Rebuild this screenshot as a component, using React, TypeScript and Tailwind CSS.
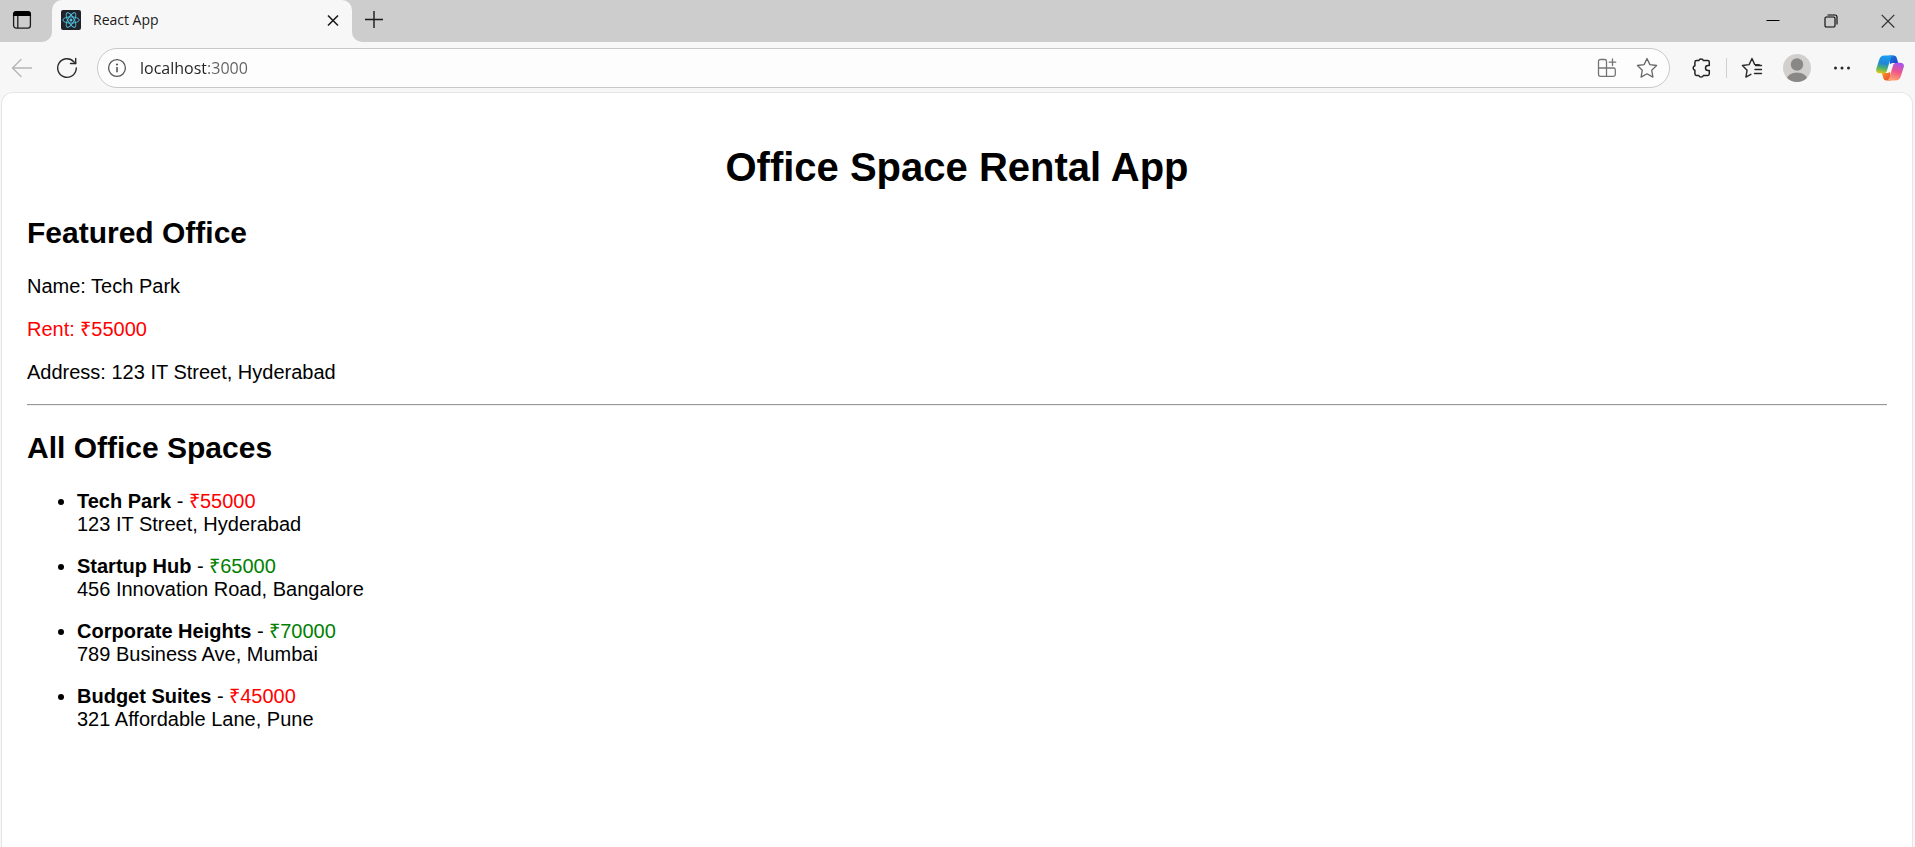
import React from "react";

type Office = { name: string; rent: number; address: string };

const offices: Office[] = [
  { name: "Tech Park", rent: 55000, address: "123 IT Street, Hyderabad" },
  { name: "Startup Hub", rent: 65000, address: "456 Innovation Road, Bangalore" },
  { name: "Corporate Heights", rent: 70000, address: "789 Business Ave, Mumbai" },
  { name: "Budget Suites", rent: 45000, address: "321 Affordable Lane, Pune" },
];

const rentColor = (rent: number) => (rent < 60000 ? "text-[#ff0000]" : "text-[#008000]");

function TabActionsIcon() {
  return (
    <svg width="20" height="20" viewBox="0 0 20 20" fill="none" stroke="#1b1b1b" strokeWidth="1.3">
      <rect x="1.6" y="1.9" width="16.8" height="16.2" rx="2.6" />
      <path d="M1 6V4.4A3.4 3.4 0 0 1 4.4 1h11.2A3.4 3.4 0 0 1 19 4.4V6z" fill="#000" stroke="none" />
      <path d="M5.8 6v12" />
    </svg>
  );
}

function ReactIcon() {
  return (
    <svg width="20" height="20" viewBox="0 0 20 20" fill="none" stroke="#53c1de" strokeWidth="0.9">
      <rect width="20" height="20" rx="2" fill="#20232a" stroke="none" />
      <ellipse cx="10" cy="10" rx="8.2" ry="3.1" />
      <ellipse cx="10" cy="10" rx="8.2" ry="3.1" transform="rotate(60 10 10)" />
      <ellipse cx="10" cy="10" rx="8.2" ry="3.1" transform="rotate(120 10 10)" />
      <circle cx="10" cy="10" r="1.5" fill="#53c1de" stroke="none" />
    </svg>
  );
}

function BackIcon() {
  return (
    <svg width="22" height="20" viewBox="0 0 22 20" fill="none" stroke="#b5b5b5" strokeWidth="1.3" strokeLinecap="round" strokeLinejoin="round">
      <path d="M20.5 10H1.5M10 1.5L1.5 10l8.5 8.5" />
    </svg>
  );
}

function ReloadIcon() {
  return (
    <svg width="22" height="22" viewBox="0 0 22 22" fill="none" stroke="#2a2a2a" strokeWidth="1.4" strokeLinecap="round" strokeLinejoin="round">
      <path d="M20.300 11a9.300 9.300 0 1 1-2.500-6.300L19.600 6.500" />
      <path d="M19.700 1.500v5h-5.200" />
    </svg>
  );
}

function InfoIcon() {
  return (
    <svg width="20" height="20" viewBox="0 0 20 20" fill="none" stroke="#555" strokeWidth="1.3">
      <circle cx="10" cy="10" r="8.4" />
      <path d="M10 9v5.2" strokeWidth="1.6" />
      <circle cx="10" cy="6.5" r="1.1" fill="#555" stroke="none" />
    </svg>
  );
}

function AppsIcon() {
  return (
    <svg width="20" height="20" viewBox="0 0 20 20" fill="none" stroke="#757575" strokeWidth="1.3" strokeLinecap="round" strokeLinejoin="round">
      <path d="M9.500 18.300H3.300a1.800 1.800 0 0 1-1.800-1.800V3.300a1.800 1.800 0 0 1 1.800-1.800h4.400a1.800 1.800 0 0 1 1.800 1.800v15zM9.500 10h7a1.800 1.800 0 0 1 1.800 1.800v4.700a1.800 1.800 0 0 1-1.800 1.800h-7M1.500 10h8" />
      <path d="M15.500 1v6.500M12.200 4.200h6.500" />
    </svg>
  );
}

function StarIcon() {
  return (
    <svg width="22" height="22" viewBox="0 0 22 22" fill="none" stroke="#686868" strokeWidth="1.3" strokeLinejoin="round">
      <path d="M11 1.500l2.900 6.100 6.700.9-4.900 4.700 1.200 6.900-5.900-3.300-5.900 3.300 1.200-6.900-4.900-4.700 6.700-.9z" />
    </svg>
  );
}

function PuzzleIcon() {
  return (
    <svg width="20" height="22" viewBox="0 0 20 22" fill="none" stroke="#222" strokeWidth="1.5" strokeLinejoin="round">
      <path d="M5.500 3.600h2.300a2.400 2.400 0 0 1 4.600 0h4.300a1.600 1.600 0 0 1 1.600 1.600v3.300h-1.300a2.500 2.500 0 0 0 0 5h1.300v3.300a1.600 1.600 0 0 1-1.600 1.600h-4.300a2.400 2.400 0 0 1-4.600 0H5.500a1.600 1.600 0 0 1-1.600-1.600v-3.500a2.400 2.400 0 0 1 0-4.600V5.200A1.600 1.600 0 0 1 5.500 3.600z" />
    </svg>
  );
}

function FavoritesIcon() {
  return (
    <svg width="22" height="22" viewBox="0 0 22 22" fill="none" stroke="#2a2a2a" strokeWidth="1.4" strokeLinejoin="round" strokeLinecap="round">
      <path d="M18.500 8l-4.900-.6L11 1.500 8.100 7.600l-6.700.9 4.700 4.700-1.200 6.900 5-2.800" />
      <path d="M14.500 8.500h6M14 12.500h6.500M13.500 16.500h7" />
    </svg>
  );
}

function ProfileIcon() {
  return (
    <svg width="28" height="28" viewBox="0 0 28 28">
      <defs>
        <clipPath id="avatar">
          <circle cx="14" cy="14" r="14" />
        </clipPath>
      </defs>
      <circle cx="14" cy="14" r="14" fill="#d2d0ce" />
      <circle cx="14" cy="10.500" r="6.200" fill="#8a8886" />
      <ellipse cx="14" cy="25.500" rx="10.200" ry="7" fill="#8a8886" clipPath="url(#avatar)" />
    </svg>
  );
}

function CopilotIcon() {
  return (
    <svg width="28" height="26" viewBox="0 0 28 26">
      <defs>
        <linearGradient id="cpLeft" x1="0.3" y1="0" x2="0.1" y2="1">
          <stop offset="0" stopColor="#1c9df0" />
          <stop offset="0.4" stopColor="#1f86d8" />
          <stop offset="0.68" stopColor="#4fb36a" />
          <stop offset="1" stopColor="#f2cc0c" />
        </linearGradient>
        <linearGradient id="cpTop" x1="0" y1="0" x2="1" y2="1">
          <stop offset="0" stopColor="#1a7fe0" />
          <stop offset="1" stopColor="#1b3fc0" />
        </linearGradient>
        <linearGradient id="cpRight" x1="0.7" y1="0" x2="0.4" y2="1">
          <stop offset="0" stopColor="#a653ee" />
          <stop offset="0.5" stopColor="#f0568a" />
          <stop offset="1" stopColor="#ffa66b" />
        </linearGradient>
        <linearGradient id="cpBottom" x1="0" y1="0" x2="1" y2="1">
          <stop offset="0" stopColor="#f9a12b" />
          <stop offset="1" stopColor="#e5402f" />
        </linearGradient>
      </defs>
      <path d="M13 .5h4.500c2 0 2.800 1 3.300 2.700L22.200 8H18c-2 0-3 .3-4 1.300z" fill="url(#cpTop)" />
      <path d="M15 25.500h-4.500c-2 0-2.800-1-3.300-2.700L5.800 18H10c2 0 3-.3 4-1.300z" fill="url(#cpBottom)" />
      <path d="M8.500.5H18c-2 .3-3 1.500-3.600 3.500L11 15.500c-.6 2-1.600 2.800-3.400 2.800H4c-3 0-4.500-1.800-3.700-4.500L3.300 4.500C4.100 1.800 5.800.5 8.500.5z" fill="url(#cpLeft)" />
      <path d="M19.500 25.500H10c2-.3 3-1.500 3.600-3.500L17 10.500c.6-2 1.600-2.800 3.400-2.800H24c3 0 4.500 1.800 3.700 4.500l-3 9.300c-.8 2.700-2.500 4-5.200 4z" fill="url(#cpRight)" />
    </svg>
  );
}

function IconButton({ label, className, children }: { label: string; className: string; children: React.ReactNode }) {
  return (
    <button type="button" aria-label={label} className={`flex shrink-0 items-center justify-center ${className}`}>
      {children}
    </button>
  );
}

function TabStrip() {
  return (
    <div className="flex h-[42px] bg-[#f7f7f7]">
      <div className="flex w-[52px] shrink-0 items-center rounded-br-[10px] bg-[#cdcdcd] pb-0.5 pl-3">
        <IconButton label="Tab actions" className="size-5">
          <TabActionsIcon />
        </IconButton>
      </div>
      <div className="w-[300px] shrink-0 bg-linear-to-b from-[#cdcdcd] from-50% to-[#f7f7f7] to-50%">
        <div className="flex h-full items-center rounded-t-[10px] bg-[#f7f7f7] pr-[11px] pb-0.5 pl-[9px]">
          <ReactIcon />
          <span className="ml-3 flex-1 text-sm text-[#1b1b1b]">React App</span>
          <IconButton label="Close tab" className="size-4">
            <svg width="16" height="16" viewBox="0 0 16 16" stroke="#1b1b1b" strokeWidth="1.6">
              <path d="M3 3.500l10 10M13 3.500l-10 10" />
            </svg>
          </IconButton>
        </div>
      </div>
      <div className="flex flex-1 items-center justify-between rounded-bl-[10px] bg-[#cdcdcd] pb-0.5">
        <IconButton label="New tab" className="ml-3 size-5">
          <svg width="20" height="20" viewBox="0 0 20 20" stroke="#1b1b1b" strokeWidth="1.4">
            <path d="M1 9.500h18M10 1v17" />
          </svg>
        </IconButton>
        <div className="flex">
          <IconButton label="Minimize" className="h-10 w-[58px]">
            <svg width="14" height="14" viewBox="0 0 14 14" stroke="#000" strokeWidth="1">
              <path d="M.5 7.500h13" />
            </svg>
          </IconButton>
          <IconButton label="Restore" className="h-10 w-[58px]">
            <svg width="14" height="16" viewBox="0 0 14 16" fill="none" stroke="#000" strokeWidth="1.1">
              <rect x="1" y="5" width="10" height="10" rx="1.2" />
              <path d="M3.500 3h7.500a2 2 0 0 1 2 2v7.500" />
            </svg>
          </IconButton>
          <IconButton label="Close" className="h-10 w-[55px]">
            <svg width="14" height="16" viewBox="0 0 14 16" stroke="#333" strokeWidth="1.2">
              <path d="M.7 2.900l12.600 12.600M13.300 2.900L.7 15.500" />
            </svg>
          </IconButton>
        </div>
      </div>
    </div>
  );
}

function Toolbar() {
  return (
    <div className="flex h-[50px] items-center px-[11px] pt-0.5">
      <IconButton label="Back" className="w-[22px]">
        <BackIcon />
      </IconButton>
      <IconButton label="Reload" className="ml-[23px] w-[22px]">
        <ReloadIcon />
      </IconButton>
      <div className="ml-[19px] flex h-10 flex-1 items-center rounded-full border border-[#c9c9c9] bg-[#fdfdfd] pr-[11px] pl-[9px]">
        <IconButton label="View site information" className="size-5">
          <InfoIcon />
        </IconButton>
        <input
          aria-label="Address"
          defaultValue="localhost:3000"
          className="ml-[13px] min-w-0 flex-1 bg-linear-to-r from-[#222222] from-[66px] to-[#606060] to-[66px] bg-clip-text text-base text-transparent caret-black outline-none"
        />
        <IconButton label="Apps" className="size-5">
          <AppsIcon />
        </IconButton>
        <IconButton label="Add to favorites" className="ml-[19px] size-[22px]">
          <StarIcon />
        </IconButton>
      </div>
      <IconButton label="Extensions" className="ml-[21px] w-5">
        <PuzzleIcon />
      </IconButton>
      <div className="ml-[15px] h-5 w-px bg-[#cfcfcf]" />
      <IconButton label="Favorites" className="ml-[14px] w-[22px]">
        <FavoritesIcon />
      </IconButton>
      <IconButton label="Profile" className="ml-5 size-7">
        <ProfileIcon />
      </IconButton>
      <IconButton label="Settings and more" className="ml-[22px] w-[18px]">
        <svg width="18" height="6" viewBox="0 0 18 6" fill="#2a2a2a">
          <circle cx="2.500" cy="3" r="1.500" />
          <circle cx="9" cy="3" r="1.500" />
          <circle cx="15.500" cy="3" r="1.500" />
        </svg>
      </IconButton>
      <IconButton label="Copilot" className="ml-[25px] w-7">
        <CopilotIcon />
      </IconButton>
    </div>
  );
}

export default function App() {
  const featured = offices[0];
  return (
    <div className="flex min-h-screen flex-col bg-[#f7f7f7] font-['Open_Sans',sans-serif]">
      <header>
        <TabStrip />
        <Toolbar />
      </header>
      <main className="mr-[2px] ml-px flex-1 rounded-t-[12px] border border-b-0 border-[#e6e6e6] bg-white px-[25px] pt-[51px] font-['Liberation_Sans',Arial,sans-serif] text-[20px] leading-[23px] text-black">
        <h1 className="text-center text-[40px] leading-[46px] font-bold">Office Space Rental App</h1>
        <h2 className="mt-[26px] text-[30px] leading-[34px] font-bold">Featured Office</h2>
        <div className="mt-[25px] flex flex-col gap-5">
          <p>Name: {featured.name}</p>
          <p className={rentColor(featured.rent)}>Rent: ₹{featured.rent}</p>
          <p>Address: {featured.address}</p>
        </div>
        <hr className="mt-5 h-[2px] border-t border-b border-t-[#9a9a9a] border-b-[#eeeeee]" />
        <h2 className="mt-[25px] text-[30px] leading-[34px] font-bold">All Office Spaces</h2>
        <ul className="mt-[25px] flex list-disc flex-col gap-[19px] pl-[50px]">
          {offices.map((o) => (
            <li key={o.name}>
              <strong>{o.name}</strong> - <span className={rentColor(o.rent)}>₹{o.rent}</span>
              <br />
              {o.address}
            </li>
          ))}
        </ul>
      </main>
    </div>
  );
}
